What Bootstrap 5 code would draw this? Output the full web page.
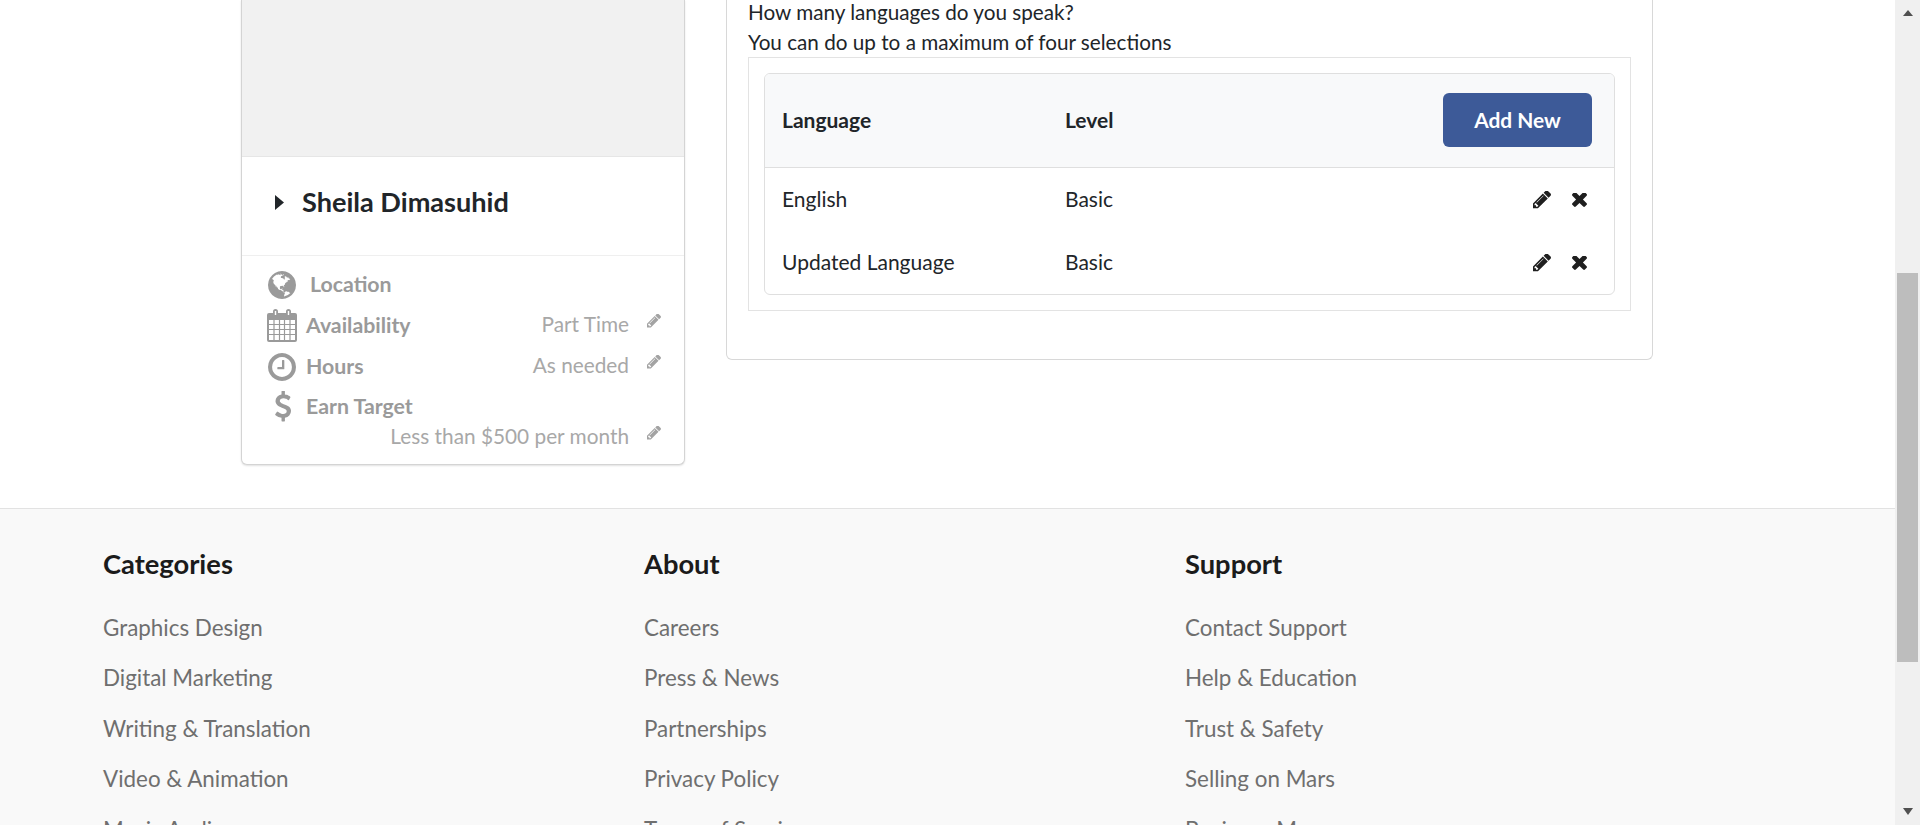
<!DOCTYPE html>
<html lang="en">
<head>
<meta charset="utf-8">
<title>Profile</title>
<link href="https://cdn.jsdelivr.net/npm/bootstrap@5.3.0/dist/css/bootstrap.min.css" rel="stylesheet">
<style>
html,body{height:825px;overflow:hidden;}
body{font-family:Lato,"Liberation Sans",sans-serif;color:#212529;background:#fff;}
.shell{height:825px;}
.page-pane{flex:1 1 0;min-width:0;height:825px;overflow:hidden;}
.top-area{height:508px;padding-left:241px;}
.side-box{width:444px;height:465px;background:#fff;border:1px solid #d4d4d4;border-top:0;border-radius:0 0 6px 6px;box-shadow:0 1px 2px rgba(0,0,0,.12);flex:none;}
.photo-ph{height:157px;background:#f1f1f1;border-bottom:1px solid #e6e6e6;}
.name-row{height:99px;padding:0 0 8px 33px;border-bottom:1px solid #efefef;color:#212529;}
.name-txt{font-size:27.1px;font-weight:700;margin-left:18px;line-height:1;}
.facts{padding:9px 23px 0 24px;color:#9a9a9a;}
.fact-row{display:flex;align-items:center;height:41px;}
.fact-first{height:40px;}
.fact-earn{height:39px;}
.fact-less{height:22px;}
.fact-ico{width:32px;flex:none;display:flex;justify-content:center;}
.fact-lbl{font-size:21.3px;font-weight:700;margin-left:8px;}
.fact-lbl-wide{margin-left:12px;}
.fact-val{font-size:20.8px;margin-left:auto;margin-top:-3px;color:#a8a8a8;}
.fact-pen{width:14px;margin-left:18px;margin-top:-12px;flex:none;}
.main-box{width:927px;height:360px;margin-left:41px;background:#fff;border:1px solid #d8d8d8;border-top:0;border-radius:0 0 6px 6px;padding:0 21px;flex:none;}
.q-line{font-size:20.7px;line-height:30px;}
.q-first{margin-top:-3px;}
.outer-box{border:1px solid #e3e3e3;padding:15px;height:254px;}
.lang-table{border:1px solid #dfdfdf;border-radius:6px;height:222px;overflow:hidden;font-size:21px;}
.lang-head{height:94px;background:#f8f9fa;border-bottom:1px solid #dfdfdf;font-weight:700;padding:0 22px 0 17px;}
.lang-row{height:63px;padding:0 27px 0 17px;}
.c-lang{width:283px;flex:none;}
.c-shift{margin-top:-2px;}
.add-btn{width:149px;height:54px;background:#3d5a98;border:0;color:#fff;font-size:20.9px;font-weight:700;border-radius:6px;padding:0;margin-top:-1px;}
.add-btn:hover{background:#3d5a98;color:#fff;}
.ico-gap{gap:21px;}
.foot{height:317px;background:#f9f9f9;border-top:1px solid #e2e2e2;padding:39px 0 0 103px;overflow:hidden;}
.foot-col{width:541px;flex:none;}
.foot-h{font-size:27.3px;font-weight:700;color:#1b1b1b;line-height:32px;margin:0 0 34.500px;}
.foot-link{display:block;font-size:22.4px;line-height:26px;margin-bottom:24.600px;color:#6f6f6f;text-decoration:none;}
.fake-bar{width:25px;flex:none;height:825px;background:#f0f0f0;display:flex;flex-direction:column;align-items:center;}
.fake-up{margin-top:10px;width:0;height:0;border-left:5.500px solid transparent;border-right:5.500px solid transparent;border-bottom:6px solid #505050;}
.fake-thumb{width:21px;height:389px;margin-top:257px;background:#bdbdbd;}
.fake-down{margin-top:auto;margin-bottom:10px;width:0;height:0;border-left:5.500px solid transparent;border-right:5.500px solid transparent;border-top:7px solid #505050;}
</style>
</head>
<body>
<svg width="0" height="0" class="d-none">
  <defs>
    <path id="pen" d="M491 1536l91-91-235-235-91 91v107h128v128h107zm523-928q0-22-22-22-10 0-17 7l-542 542q-7 7-7 17 0 22 22 22 10 0 17-7l542-542q7-7 7-17zm-54-192l416 416-832 832h-416v-416zm683 96q0 53-37 90l-166 166-416-416 166-165q36-38 90-38 53 0 91 38l235 234q37 39 37 91z"/>
    <path id="times" d="M1298 1214q0 40-28 68l-136 136q-28 28-68 28t-68-28l-294-294-294 294q-28 28-68 28t-68-28l-136-136q-28-28-28-68t28-68l294-294-294-294q-28-28-28-68t28-68l136-136q28-28 68-28t68 28l294 294 294-294q28-28 68-28t68 28l136 136q28 28 28 68t-28 68l-294 294 294 294q28 28 28 68z"/>
  </defs>
</svg>
<div class="shell d-flex">
  <div class="page-pane">
    <div class="top-area d-flex align-items-start">
      <div class="side-box">
        <div class="photo-ph"></div>
        <div class="name-row d-flex align-items-center">
          <svg width="9" height="15" viewBox="0 0 9 15"><path d="M0 0L9 7.500L0 15Z" fill="#212529"/></svg>
          <span class="name-txt">Sheila Dimasuhid</span>
        </div>
        <div class="facts">
          <div class="fact-row fact-first">
            <span class="fact-ico"><svg width="28" height="28" viewBox="128 128 1536 1536"><path fill="#9a9a9a" d="M896 128q209 0 385.500 103t279.500 279.500 103 385.500-103 385.500-279.500 279.500-385.500 103-385.500-103-279.500-279.500-103-385.500 103-385.500 279.500-279.500 385.500-103zm274 521q-2 1-9.500 9.500t-13.500 9.500q2 0 4.500-5t5-11 3.500-7q6-7 22-15 14-6 52-12 34-8 51 11-2-2 9.500-13t14.500-12q3-2 15-4.500t15-7.500l2-22q-12 1-17.500-7t-6.500-21q0 2-6 8 0-7-4.500-8t-11.500 1-9 1q-10-3-15-7.500t-8-16.500-4-15q-2-5-9.500-11t-9.500-10q-1-2-2.500-5.500t-3-6.500-4-5.500-5.500-2.500-7 5-7.500 10-4.500 5q-3-2-6-1.500t-4.500 1-4.500 3-5 3.500q-3 2-8.500 3t-8.500 2q15-5-1-11-10-4-16-3 9-4 7.500-12t-8.500-14h5q-1-4-8.500-8.500t-17.500-8.500-13-6q-8-5-34-9.500t-33-.5q-5 6-4.500 10.500t4 14 3.500 12.500q1 6-5.500 13t-6.500 12q0 7 14 15.500t10 21.500q-3 8-16 16t-16 12q-5 8-1.500 18.500t10.500 16.500q2 2 1.500 4t-3.500 4.500-5.500 4-6.500 3.500l-3 2q-11 5-20.500-6t-13.500-26q-7-25-16-30-23-8-29 1-5-13-41-26-25-9-58-4 6-1 0-15-7-15-19-12 3-6 4-17.500t1-13.500q3-13 12-23 1-1 7-8.500t9.500-13.500.5-6q35 4 50-11 5-5 11.500-17t10.500-17q9-6 14-5.500t14.500 5.500 14.500 5q14 1 15.500-11t-7.500-20q12 1 3-17-4-7-8-9-12-4-27 5-8 4 2 8-1-1-9.500 10.500t-16.500 17.500-16-5q-1-1-5.500-13.500t-9.500-13.500q-8 0-16 15 3-8-11-15t-24-8q19-12-8-27-7-4-20.500-5t-19.500 4q-5 7-5.500 11.500t5 8 10.500 5.500 11.500 4 8.500 3q14 10 8 14-2 1-8.500 3.500t-11.500 4.500-6 4q-3 4 0 14t-2 14q-5-5-9-17.500t-7-16.500q7 9-25 6l-10-1q-4 0-16 2t-20.500 1-13.500-8q-4-8 0-20 1-4 4-2-4-3-11-9.500t-10-8.500q-46 15-94 41 6 1 12-1 5-2 13-6.500t10-5.500q34-14 42-7l5-5q14 16 20 25-7-4-30-1-20 6-22 12 7 12 5 18-4-3-11.500-10t-14.500-11-15-5q-16 0-22 1-146 80-235 222 7 7 12 8 4 1 5 9t2.500 11 11.500-3q9 8 3 19 1-1 44 27 19 17 21 21 3 11-10 18-1-2-9-9t-9-4q-3 5 .5 18.500t10.500 12.500q-7 0-9.500 16t-2.500 35.500-1 23.500l2 1q-3 12 5.500 34.500t21.500 19.500q-13 3 20 43 6 8 8 9 3 2 12 7.500t15 10 10 10.500q4 5 10 22.500t14 23.500q-2 6 9.500 20t10.500 23q-1 0-2.500 1t-2.500 1q3 7 15.500 14t15.500 13q1 3 2 10t3 11 8 2q2-20-24-62-15-25-17-29-3-5-5.500-15.500t-4.500-14.500q2 0 6 1.500t8.500 3.500 7.500 4 2 3q-3 7 2 17.500t12 18.500 17 19 12 13q6 6 14 19.500t0 13.500q9 0 20 10.500t17 19.500q5 8 8 26t5 24q2 7 8.500 13.500t12.500 9.500l16 8 13 7q5 2 18.500 10.500t21.500 11.500q10 4 16 4t14.500-2.500 13.500-3.500q15-2 29 15t21 21q36 19 55 11-2 1 .5 7.500t8 15.500 9 14.500 5.500 8.500q5 6 18 15t18 15q6-4 7-9-3 8 7 20t18 10q14-3 14-32-31 15-49-18 0-1-2.500-5.500t-4-8.500-2.500-8.500 0-7.500 5-3q9 0 10-3.500t-2-12.500-4-13q-1-8-11-20t-12-15q-5 9-16 8t-16-9q0 1-1.500 5.500t-1.500 6.500q-13 0-15-1 1-3 2.500-17.500t3.500-22.500q1-4 5.500-12t7.500-14.500 4-12.500-4.500-9.500-17.500-2.500q-19 1-26 20-1 3-3 10.500t-5 11.500-9 7q-7 3-24 2t-24-5q-13-8-22.500-29t-9.500-37q0-10 2.500-26.500t3-25-5.500-24.500q3-2 9-9.500t10-10.500q2-1 4.500-1.500t4.500 0 4-1.500 3-6q-1-1-4-3-3-3-4-3 7 3 28.500-1.500t27.500 1.500q15 11 22-2 0-1-2.500-9.500t-.5-13.500q5 27 29 9 3 3 15.500 5t17.500 5q3 2 7 5.500t5.500 4.500 5-.5 8.500-6.500q10 14 12 24 11 40 19 44 7 3 11 2t4.500-9.500 0-14-1.500-12.500l-1-8v-18l-1-8q-15-3-18.500-12t1.500-18.500 15-18.500q1-1 8-3.500t15.500-6.500 12.500-8q21-19 15-35 7 0 11-9-1 0-5-3t-7.500-5-4.500-2q9-5 2-16 5-3 7.500-11t7.500-10q9 12 21 2 8-8 1-16 5-7 20.500-10.500t18.500-9.500q7 2 8-2t1-12 3-12q4-5 15-9t13-5l17-11q3-4 0-4 18 2 31-11 10-11-6-20 3-6-3-9.500t-15-5.500q3-1 11.500-.5t10.500-1.500q15-10-7-16-17-5-43 12zm-163 877q206-36 351-189-3-3-12.500-4.500t-12.500-3.500q-18-7-24-8 1-7-2.500-13t-8-9-12.500-8-11-7q-2-2-7-6t-7-5.500-7.500-4.500-8.500-2-10 1l-3 1q-3 1-5.500 2.500t-5.500 3-4 3 0 2.500q-21-17-36-22-5-1-11-5.500t-10.500-7-10-1.500-11.500 7q-5 5-6 15t-2 13q-7-5 0-17.500t2-18.500q-3-6-10.500-4.500t-12 4.500-11.500 8.500-9 6.500-8.500 5.500-8.500 7.500q-3 4-6 12t-5 11q-2-4-11.500-6.500t-9.500-5.500q2 10 4 35t5 38q7 31-12 48-27 25-29 40-4 22 12 26 0 7-8 20.500t-7 21.500q0 6 2 16z"/></svg></span>
            <span class="fact-lbl fact-lbl-wide">Location</span>
          </div>
          <div class="fact-row">
            <span class="fact-ico"><svg width="30" height="33" viewBox="0 0 30 33"><path d="M2 4h4V2.500a2.500 2.500 0 0 1 5 0V4h8V2.500a2.500 2.500 0 0 1 5 0V4h4a2 2 0 0 1 2 2v25a2 2 0 0 1-2 2H2a2 2 0 0 1-2-2V6a2 2 0 0 1 2-2z" fill="#9a9a9a"/><path d="M2 11h26v20H2z" fill="#fff"/><path d="M2 15.500h26M2 20.500h26M2 25.500h26M7 11v20M12.500 11v20M17.500 11v20M23 11v20" stroke="#9a9a9a" stroke-width="1.200" fill="none"/><path d="M8.500 2v4M21.500 2v4" stroke="#fff" stroke-width="1.400"/></svg></span>
            <span class="fact-lbl">Availability</span>
            <span class="fact-val">Part Time</span>
            <span class="fact-pen"><svg width="14" height="14" viewBox="128 256 1516 1408"><use href="#pen" fill="#a3a3a3"/></svg></span>
          </div>
          <div class="fact-row">
            <span class="fact-ico"><svg width="28" height="28" viewBox="128 128 1536 1536"><path fill="#9a9a9a" d="M1024 544v448q0 14-9 23t-23 9h-320q-14 0-23-9t-9-23v-64q0-14 9-23t23-9h224v-352q0-14 9-23t23-9h64q14 0 23 9t9 23zm416 352q0-148-73-273t-198-198-273-73-273 73-198 198-73 273 73 273 198 198 273 73 273-73 198-198 73-273zm224 0q0 209-103 385.500t-279.500 279.500-385.500 103-385.500-103-279.500-279.500-103-385.500 103-385.500 279.500-279.500 385.500-103 385.500 103 279.500 279.500 103 385.500z"/></svg></span>
            <span class="fact-lbl">Hours</span>
            <span class="fact-val">As needed</span>
            <span class="fact-pen"><svg width="14" height="14" viewBox="128 256 1516 1408"><use href="#pen" fill="#a3a3a3"/></svg></span>
          </div>
          <div class="fact-row fact-earn">
            <span class="fact-ico"><svg width="18" height="32" viewBox="100 96 1058 1600"><path fill="#9a9a9a" d="M1158 1135q0 153-99.500 263.500t-258.500 136.500v175q0 14-9 23t-23 9h-135q-13 0-22.500-9.500t-9.500-22.500v-175q-66-9-127.500-31t-101.500-44.500-74-48-46.500-37.500-17.500-18q-17-21-2-41l103-135q7-10 23-12 15-2 24 9l2 2q113 99 243 125 37 8 74 8 81 0 142.500-43t61.500-122q0-28-15-53t-33.500-42-58.500-37.500-66-32-80-32.500q-39-16-61.500-25t-61.500-26.500-62.500-31-56.500-35.500-53.500-42.500-43.500-49-35.500-58-21-66.500-8.500-78q0-138 98-242t255-134v-180q0-13 9.500-22.500t22.500-9.500h135q14 0 23 9t9 23v176q57 6 110.500 23t87 33.500 63.500 37.500 39 29 15 14q17 18 5 38l-81 146q-8 15-23 16-14 3-27-7-3-3-14.500-12t-39-26.500-58.500-32-74.500-26-85.500-11.500q-95 0-155 43t-60 111q0 26 8.500 48t29.500 41.500 39.500 33 56 31 60.500 27 70 27.500q53 20 81 31.500t76 35 75.500 42.500 62 50 53 63.500 31.500 76.500 13 94z"/></svg></span>
            <span class="fact-lbl">Earn Target</span>
          </div>
          <div class="fact-row fact-less">
            <span class="fact-val">Less than $500 per month</span>
            <span class="fact-pen"><svg width="14" height="14" viewBox="128 256 1516 1408"><use href="#pen" fill="#a3a3a3"/></svg></span>
          </div>
        </div>
      </div>
      <div class="main-box">
        <div class="q-line q-first">How many languages do you speak?</div>
        <div class="q-line">You can do up to a maximum of four selections</div>
        <div class="outer-box">
          <div class="lang-table">
            <div class="lang-head d-flex align-items-center">
              <div class="c-lang c-shift">Language</div>
              <div class="c-shift">Level</div>
              <button type="button" class="btn add-btn ms-auto">Add New</button>
            </div>
            <div class="lang-row d-flex align-items-center">
              <div class="c-lang c-shift">English</div>
              <div class="c-shift">Basic</div>
              <div class="ms-auto d-flex align-items-center ico-gap">
                <svg width="18" height="18" viewBox="128 256 1516 1408"><use href="#pen" fill="#1f1f1f"/></svg>
                <svg width="15" height="14" viewBox="110 346 1188 1100"><use href="#times" fill="#1f1f1f"/></svg>
              </div>
            </div>
            <div class="lang-row d-flex align-items-center">
              <div class="c-lang c-shift">Updated Language</div>
              <div class="c-shift">Basic</div>
              <div class="ms-auto d-flex align-items-center ico-gap">
                <svg width="18" height="18" viewBox="128 256 1516 1408"><use href="#pen" fill="#1f1f1f"/></svg>
                <svg width="15" height="14" viewBox="110 346 1188 1100"><use href="#times" fill="#1f1f1f"/></svg>
              </div>
            </div>
          </div>
        </div>
      </div>
    </div>
    <footer class="foot d-flex align-items-start">
      <div class="foot-col">
        <h5 class="foot-h">Categories</h5>
        <a class="foot-link" href="#">Graphics Design</a>
        <a class="foot-link" href="#">Digital Marketing</a>
        <a class="foot-link" href="#">Writing &amp; Translation</a>
        <a class="foot-link" href="#">Video &amp; Animation</a>
        <a class="foot-link" href="#">Music Audio</a>
      </div>
      <div class="foot-col">
        <h5 class="foot-h">About</h5>
        <a class="foot-link" href="#">Careers</a>
        <a class="foot-link" href="#">Press &amp; News</a>
        <a class="foot-link" href="#">Partnerships</a>
        <a class="foot-link" href="#">Privacy Policy</a>
        <a class="foot-link" href="#">Terms of Service</a>
      </div>
      <div class="foot-col">
        <h5 class="foot-h">Support</h5>
        <a class="foot-link" href="#">Contact Support</a>
        <a class="foot-link" href="#">Help &amp; Education</a>
        <a class="foot-link" href="#">Trust &amp; Safety</a>
        <a class="foot-link" href="#">Selling on Mars</a>
        <a class="foot-link" href="#">Business Mars</a>
      </div>
    </footer>
  </div>
  <div class="fake-bar">
    <div class="fake-up"></div>
    <div class="fake-thumb"></div>
    <div class="fake-down"></div>
  </div>
</div>
<script src="https://cdn.jsdelivr.net/npm/bootstrap@5.3.0/dist/js/bootstrap.bundle.min.js"></script>
</body>
</html>
